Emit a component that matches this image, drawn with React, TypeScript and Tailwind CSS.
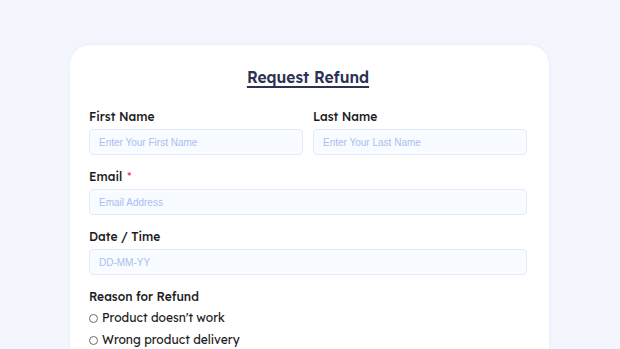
import React from "react";

const labelCls = "block text-[12px] leading-[16px] font-medium text-[#1c1c22] mb-[4px]";
const inputCls =
  "block w-full h-[26px] rounded-[4px] border border-[#e2eaf7] bg-[#f8fbff] px-[9px] text-[10px] text-[#334] placeholder:text-[#a8bff0] outline-none";

function Field({ label, placeholder, required }: { label: string; placeholder: string; required?: boolean }) {
  return (
    <div className="flex-1">
      <label className={labelCls}>
        {label}
        {required && <span className="text-[#e5484d] ml-[5px] text-[10px] align-top">*</span>}
      </label>
      <input className={inputCls} placeholder={placeholder} style={{ fontFamily: '"Liberation Sans", Arial, sans-serif' }} />
    </div>
  );
}

function Radio({ label }: { label: string }) {
  return (
    <div className="flex items-center gap-[4px] h-[22px]">
      <span className="w-[9px] h-[9px] rounded-full border border-[#6b6b73] bg-white" />
      <span className="text-[12px] text-[#1c1c22]">{label}</span>
    </div>
  );
}

export default function App() {
  return (
    <div
      className="w-[620px] h-[349px] overflow-hidden bg-[#f3f6fd] pt-[45px]"
      style={{ fontFamily: '"Lexend", "Inter", "Noto Sans", sans-serif' }}
    >
      <div className="ml-[70px] w-[479px] h-[400px] bg-white rounded-t-[20px] shadow-[0_0_3px_rgba(180,195,230,0.25)] pl-[19px] pr-[22px] pt-[22px]">
        <h1 className="text-center text-[15.5px] leading-[20px] font-semibold text-[#2b3255] underline underline-offset-[3px] decoration-[1.5px]">
          Request Refund
        </h1>
        <div className="mt-[22px] flex gap-[10px]">
          <Field label="First Name" placeholder="Enter Your First Name" />
          <Field label="Last Name" placeholder="Enter Your Last Name" />
        </div>
        <div className="mt-[14px]">
          <Field label="Email" placeholder="Email Address" required />
        </div>
        <div className="mt-[14px]">
          <Field label="Date / Time" placeholder="DD-MM-YY" />
        </div>
        <div className="mt-[14px]">
          <div className="text-[12px] leading-[16px] font-medium text-[#1c1c22] mb-[2px]">Reason for Refund</div>
          <Radio label="Product doesn't work" />
          <Radio label="Wrong product delivery" />
        </div>
      </div>
    </div>
  );
}
